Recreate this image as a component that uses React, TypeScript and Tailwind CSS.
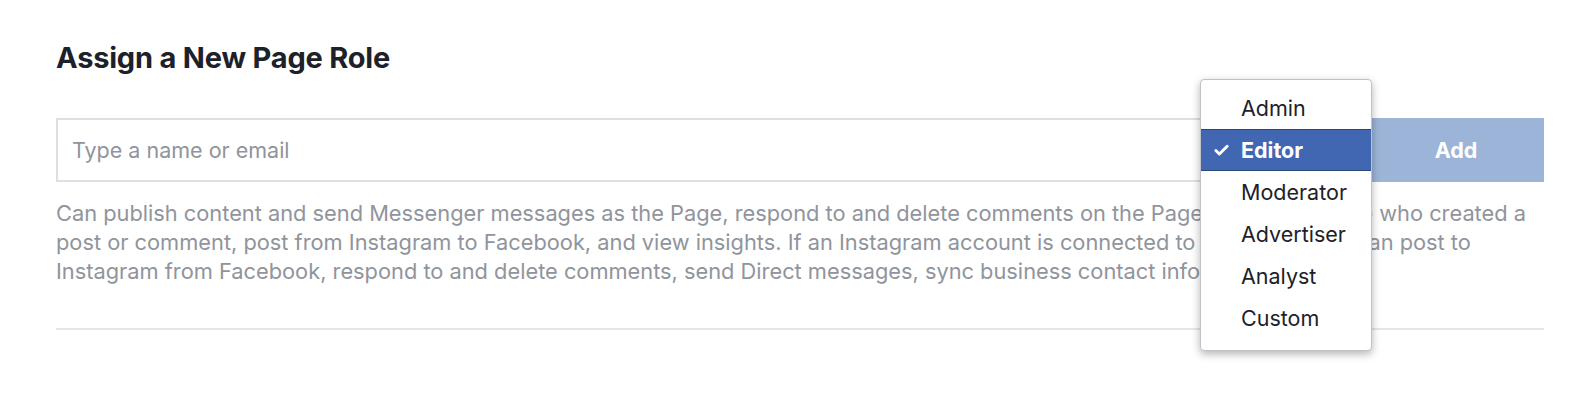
import { Check } from 'lucide-react';

const roles = ['Admin', 'Editor', 'Moderator', 'Advertiser', 'Analyst', 'Custom'];
const selected = 'Editor';

// Lines are broken as in the reference
const description = [
  'Can publish content and send Messenger messages as the Page, respond to and delete comments on the Page, create ads, see who created a',
  'post or comment, post from Instagram to Facebook, and view insights. If an Instagram account is connected to the Page, they can post to',
  'Instagram from Facebook, respond to and delete comments, send Direct messages, sync business contact info and create ads.',
];

export default function App() {
  return (
    <div
      className="relative w-[1588px] h-[400px] overflow-hidden bg-white px-[56px] pt-[40px]"
      style={{ fontFamily: 'Inter, "Noto Sans", sans-serif' }}
    >
      <h2 className="text-[29px] leading-[36px] font-bold tracking-[-0.2px] text-[#1d2129]">Assign a New Page Role</h2>

      {/* Name input + add button */}
      <div className="mt-[42px] flex h-[64px] mr-[-12px]">
        <input
          className="flex-1 border-2 border-[#dddfe2] px-[14px] text-[21.5px] text-[#1d2129] placeholder:text-[#90949c] outline-none"
          placeholder="Type a name or email"
        />
        <button className="w-[176px] bg-[#9cb4d8] text-white text-[21.5px] font-bold">Add</button>
      </div>

      {/* Role description */}
      <p className="mt-[17px] text-[21.8px] leading-[29px] text-[#90949c]">
        {description.map((line) => (
          <span key={line} className="block whitespace-nowrap">
            {line}
          </span>
        ))}
      </p>

      <div className="mt-[42px] mr-[-12px] border-t-2 border-[#e5e6e9]" />

      {/* Role dropdown */}
      <div className="absolute left-[1200px] top-[79px] w-[172px] rounded-[4px] border border-[#bfc2c7] bg-white pt-[7px] pb-[11px] shadow-[0_3px_8px_rgba(0,0,0,0.3)]">
        {roles.map((role) => {
          const active = role === selected;
          return (
            <div
              key={role}
              className={
                active
                  ? 'relative flex h-[42px] items-center border-y border-[#29487d] bg-[#4267b2] pl-[40px] text-[21.5px] font-bold text-white'
                  : 'relative flex h-[42px] items-center pl-[40px] text-[21.5px] text-[#1d2129]'
              }
            >
              {active && <Check className="absolute left-[12px] h-[17px] w-[17px]" strokeWidth={4} />}
              {role}
            </div>
          );
        })}
      </div>
    </div>
  );
}
